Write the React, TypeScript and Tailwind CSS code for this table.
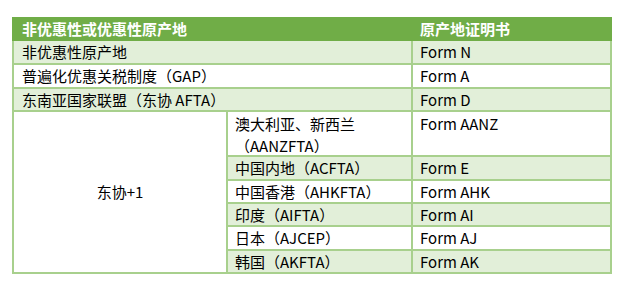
import React from 'react';

const font = { fontFamily: '"Noto Sans CJK SC", "Noto Sans", sans-serif' };

const light = 'bg-[#e2efd9]';
const white = 'bg-white';

const App: React.FC = () => {
  return (
    <div className="w-[627px] h-[282px] bg-white pt-[17px] pl-[12px] text-[15px] text-black" style={font}>
      <div className="w-[600px]">
        {/* header */}
        <div className="flex h-[24px] items-center bg-[#70ad47] font-bold text-white">
          <div className="w-[401px] pl-[10px]">非优惠性或优惠性原产地</div>
          <div className="pl-[7px]">原产地证明书</div>
        </div>

        {/* body: gaps show the border colour */}
        <div className="grid grid-cols-[212px_183px_197px] grid-rows-[22.3px_21.3px_21.3px_43.5px_21.3px_21.3px_21.3px_21.3px_21.3px] gap-[2px] bg-[#a8d08d] px-[2px] pb-[2px] leading-[21px]">
          <div className={`col-span-2 pl-[8px] ${light}`}>非优惠性原产地</div>
          <div className={`pl-[7px] ${light}`}>Form N</div>

          <div className={`col-span-2 pl-[8px] ${white}`}>普遍化优惠关税制度（GAP）</div>
          <div className={`pl-[7px] ${white}`}>Form A</div>

          <div className={`col-span-2 pl-[8px] ${light}`}>东南亚国家联盟（东协 AFTA）</div>
          <div className={`pl-[7px] ${light}`}>Form D</div>

          <div className={`row-span-6 flex items-center justify-center ${white}`}>东协+1</div>
          <div className={`pl-[7px] pt-[1px] leading-[22px] ${white}`}>
            澳大利亚、新西兰
            <br />
            （AANZFTA）
          </div>
          <div className={`pl-[7px] pt-[1px] ${white}`}>Form AANZ</div>

          <div className={`pl-[7px] ${light}`}>中国内地（ACFTA）</div>
          <div className={`pl-[7px] ${light}`}>Form E</div>

          <div className={`pl-[7px] ${white}`}>中国香港（AHKFTA）</div>
          <div className={`pl-[7px] ${white}`}>Form AHK</div>

          <div className={`pl-[7px] ${light}`}>印度（AIFTA）</div>
          <div className={`pl-[7px] ${light}`}>Form AI</div>

          <div className={`pl-[7px] ${white}`}>日本（AJCEP）</div>
          <div className={`pl-[7px] ${white}`}>Form AJ</div>

          <div className={`pl-[7px] ${light}`}>韩国（AKFTA）</div>
          <div className={`pl-[7px] ${light}`}>Form AK</div>
        </div>
      </div>
    </div>
  );
};

export default App;
